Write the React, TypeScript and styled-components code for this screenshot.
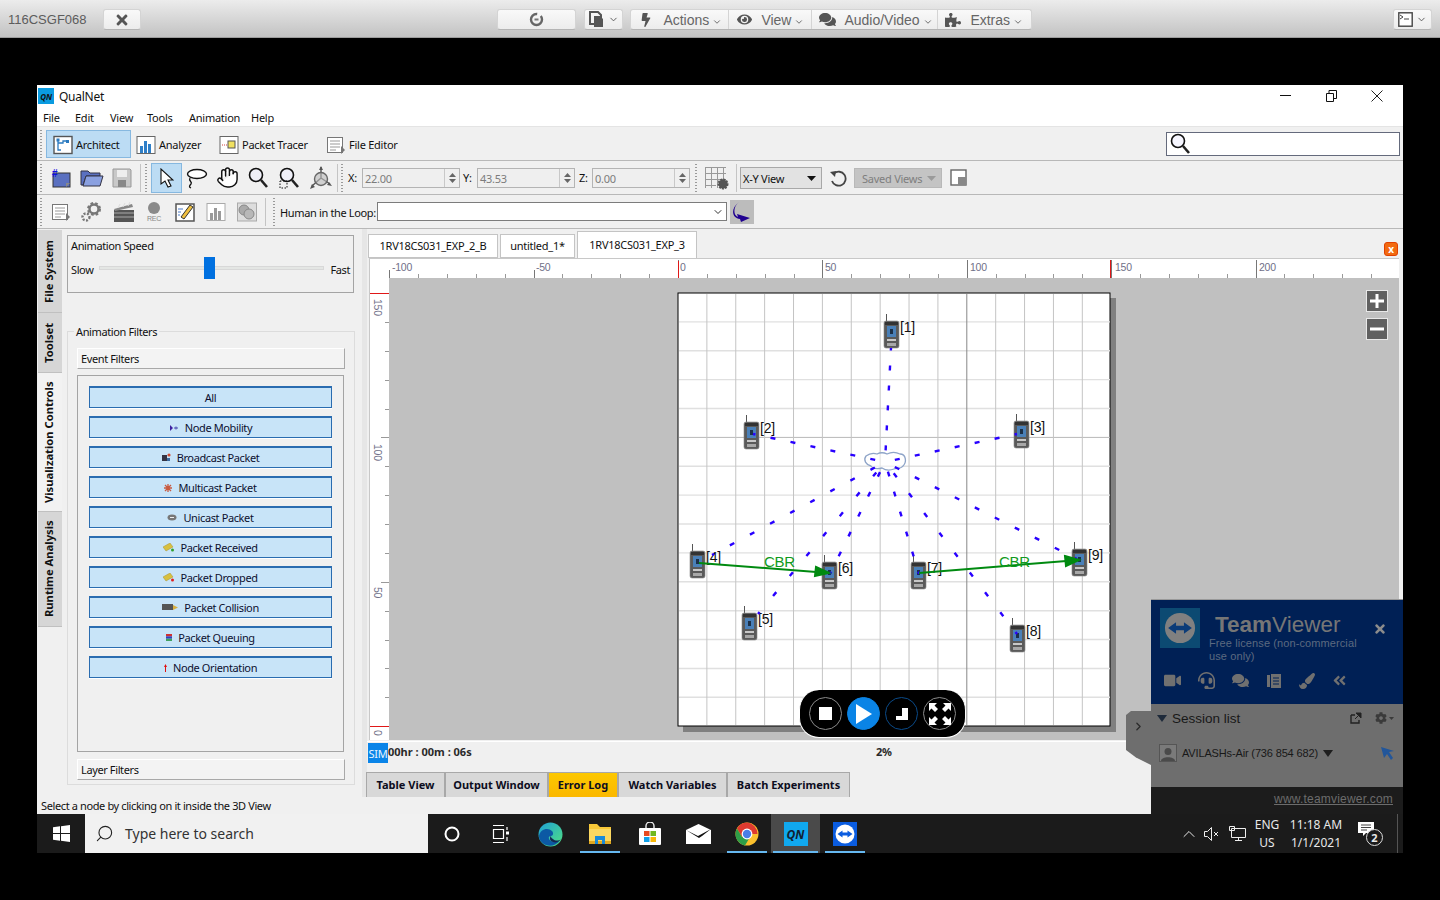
import React from "react";
import styled, { createGlobalStyle } from "styled-components";
import {
  FaBolt,
  FaEye,
  FaComments,
  FaPuzzlePiece,
  FaTimes,
  FaVideo,
  FaHeadset,
  FaPaintBrush,
  FaAngleDoubleLeft,
  FaCog,
} from "react-icons/fa";
import { ChevronDown, ChevronRight, Hand, Search } from "lucide-react";

const GlobalStyle = createGlobalStyle`
  html, body { margin: 0; padding: 0; background: #000; }
  * { box-sizing: border-box; }
  body { font-family: "Liberation Sans", Arial, sans-serif; }
`;

const Page = styled.div`
  width: 1440px;
  height: 900px;
  background: #000;
  overflow: hidden;
`;

/* remote-control bar on top */
const TopBar = styled.div`
  height: 38px;
  display: flex;
  align-items: center;
  padding: 2px 8px 0;
  background: linear-gradient(#ececec, #c2c2c2);
  border-bottom: 1px solid #9c9c9c;
  color: #666;
  font-size: 14px;
`;

const HostName = styled.div`
  width: 96px;
  font-size: 13px;
  color: #5c5c5c;
`;

const BarBtn = styled.div<{ $w: number; $ml?: number }>`
  width: ${(p) => p.$w}px;
  margin-left: ${(p) => p.$ml ?? 0}px;
  height: 21px;
  display: flex;
  align-items: center;
  justify-content: center;
  gap: 3px;
  background: linear-gradient(#f9f9f9, #ececec);
  border: 1px solid #d4d4d4;
  border-bottom-color: #b4b4b4;
  border-radius: 3px;
  color: #555;
`;

const BarGroup = styled.div`
  margin-left: 7px;
  height: 21px;
  display: flex;
  background: linear-gradient(#f9f9f9, #ececec);
  border: 1px solid #d4d4d4;
  border-bottom-color: #b4b4b4;
  border-radius: 3px;
`;

const BarItem = styled.div<{ $w: number }>`
  width: ${(p) => p.$w}px;
  display: flex;
  align-items: center;
  padding-left: 6px;
  border-right: 1px solid #d4d4d4;
  &:last-child { border-right: 0; }
`;

const BarIcon = styled.span`
  width: 18px;
  margin-right: 8px;
  display: flex;
  justify-content: center;
  color: #555;
`;

const Caret = styled(ChevronDown)`
  margin-left: 3px;
  margin-top: 4px;
  color: #555;
`;

/* remote window */
const Desktop = styled.div`
  position: relative;
  width: 1366px;
  height: 768px;
  margin: 47px 0 0 37px;
  background: #f0f0f0;
  display: flex;
  flex-direction: column;
  font-family: "Noto Sans", "Liberation Sans", sans-serif;
  font-size: 11px;
  color: #111;
  letter-spacing: -0.25px;
`;

const TitleBar = styled.div`
  height: 22px;
  background: #fff;
  display: flex;
  align-items: center;
  padding-left: 1px;
  font-size: 12px;
`;

const AppLogo = styled.div`
  width: 16px;
  height: 16px;
  background: #0a9be0;
  color: #111;
  font-size: 8px;
  font-weight: 700;
  font-style: italic;
  display: flex;
  align-items: center;
  justify-content: center;
  margin-right: 5px;
`;

const WinControls = styled.div`
  margin-left: auto;
  display: flex;
  align-items: center;
  padding-right: 3px;
`;

const WinControl = styled.div`
  width: 46px;
  display: flex;
  justify-content: center;
`;

const MenuBar = styled.div`
  height: 20px;
  background: #fff;
  display: flex;
  align-items: center;
  padding: 2px 0 0 6px;
  border-bottom: 1px solid #e4e4e4;
`;

const MenuItem = styled.div<{ $w: number }>`
  width: ${(p) => p.$w}px;
`;

const ToolRow = styled.div`
  height: 34px;
  display: flex;
  align-items: center;
  padding-left: 3px;
  border-bottom: 1px solid #b8b8b8;
  background: #f0f0f0;
  flex: none;
`;

const Grip = styled.div`
  width: 2px;
  height: 28px;
  flex: none;
  background: repeating-linear-gradient(#9a9a9a 0 1px, transparent 1px 3px);
`;

const Sep = styled.div<{ $ml?: number; $mr?: number }>`
  width: 1px;
  height: 28px;
  flex: none;
  background: #c4c4c4;
  margin-left: ${(p) => p.$ml ?? 0}px;
  margin-right: ${(p) => p.$mr ?? 0}px;
`;

const ModeBtn = styled.div<{ $w: number; $active?: boolean }>`
  width: ${(p) => p.$w}px;
  height: 28px;
  display: flex;
  align-items: center;
  gap: 3px;
  padding: 2px 0 0 ${(p) => (p.$active ? 6 : 0)}px;
  background: ${(p) => (p.$active ? "#bcdcf4" : "transparent")};
  border: 1px solid ${(p) => (p.$active ? "#86b8e0" : "transparent")};
`;

const SearchBox = styled.div`
  width: 234px;
  height: 24px;
  margin-left: auto;
  margin-right: 3px;
  background: #fff;
  border: 1px solid #646a7c;
  display: flex;
  align-items: center;
  padding-left: 1px;
`;

const IconCell = styled.div<{ $w: number; $active?: boolean; $ml?: number }>`
  width: ${(p) => p.$w}px;
  height: 30px;
  flex: none;
  margin-left: ${(p) => p.$ml ?? 0}px;
  display: flex;
  align-items: center;
  justify-content: center;
  background: ${(p) => (p.$active ? "#bcdcf4" : "transparent")};
  border: 1px solid ${(p) => (p.$active ? "#86b8e0" : "transparent")};
`;

const CoordLabel = styled.div<{ $w: number; $ml?: number }>`
  width: ${(p) => p.$w}px;
  margin-left: ${(p) => p.$ml ?? 0}px;
`;

const CoordField = styled.div`
  width: 98px;
  height: 20px;
  display: flex;
  border: 1px solid #b4b4b4;
  color: #7c7c7c;
  background: #efefef;
`;

const CoordValue = styled.div`
  flex: 1;
  padding: 2px 2px 0;
  border-right: 1px solid #c8c8c8;
`;

const Spinner = styled.div`
  width: 14px;
  display: flex;
  flex-direction: column;
  align-items: center;
  justify-content: center;
  gap: 2px;
`;

const ViewSelect = styled.div`
  width: 82px;
  height: 22px;
  margin-left: 3px;
  padding: 1px 5px 0 2px;
  display: flex;
  align-items: center;
  justify-content: space-between;
  background: #e2e2e2;
  border: 1px solid #a8a8a8;
`;

const SavedViews = styled.div`
  width: 88px;
  height: 20px;
  margin-left: 1px;
  padding: 1px 5px 0 7px;
  display: flex;
  align-items: center;
  justify-content: space-between;
  background: #c4c4c4;
  border: 1px solid #b8b8b8;
  color: #7e7e7e;
`;

const HitlLabel = styled.div`
  margin-left: 5px;
  width: 97px;
  padding-top: 1px;
  white-space: nowrap;
  letter-spacing: -0.35px;
`;

const HitlCombo = styled.div`
  width: 350px;
  height: 19px;
  background: #fff;
  border: 1px solid #7c7c7c;
  display: flex;
  align-items: center;
  justify-content: flex-end;
  padding-right: 2px;
`;

const HitlArrow = styled.div`
  width: 24px;
  height: 24px;
  margin-left: 3px;
  background: #bcbcbc;
  display: flex;
  align-items: center;
  justify-content: center;
`;

/* main area */
const Main = styled.div`
  flex: 1;
  display: flex;
  min-height: 0;
`;

const VTabs = styled.div`
  width: 25px;
  padding: 1px 0 0 1px;
  flex: none;
  display: flex;
  flex-direction: column;
`;

const VTab = styled.div<{ $h: number; $active?: boolean }>`
  height: ${(p) => p.$h}px;
  width: 24px;
  padding-left: 3px;
  background: ${(p) => (p.$active ? "#f2f2f2" : "#d6d6d6")};
  border-top: 1px solid #c0c0c0;
  display: flex;
  align-items: center;
  justify-content: center;
  writing-mode: vertical-rl;
  transform: rotate(180deg);
  font-weight: 700;
  font-size: 11.2px;
  letter-spacing: 0;
  white-space: nowrap;
`;

const SidePanel = styled.div`
  width: 300px;
  flex: none;
  padding: 6px 0 0 5px;
  display: flex;
  flex-direction: column;
  letter-spacing: -0.38px;
`;

const SpeedBox = styled.div`
  width: 287px;
  height: 58px;
  border: 1px solid #a4a4a4;
  padding: 2px 3px;
`;

const SpeedRow = styled.div`
  display: flex;
  align-items: center;
  margin-top: 9px;
  justify-content: space-between;
`;

const SliderTrack = styled.div`
  position: relative;
  width: 225px;
  height: 4px;
  margin-top: -4px;
  background: #e4e6e4;
  border: 1px solid #d8d8d8;
`;

const SliderThumb = styled.div`
  position: absolute;
  left: 104px;
  top: -10px;
  width: 11px;
  height: 22px;
  background: #0070e0;
`;

const FilterFieldset = styled.fieldset`
  width: 288px;
  height: 460px;
  margin: 32px 0 0;
  padding: 10px 9px 0;
  border: 1px solid #dcdcdc;
  legend { padding: 0 2px; margin-left: -3px; line-height: 13px; }
`;

const SectionBar = styled.div`
  height: 21px;
  width: 268px;
  background: #f3f3f3;
  border-top: 1px solid #fff;
  border-left: 1px solid #fff;
  border-right: 1px solid #a8a8a8;
  border-bottom: 1px solid #a8a8a8;
  display: flex;
  align-items: center;
  padding-left: 3px;
`;

const FilterList = styled.div`
  width: 267px;
  height: 377px;
  margin: 6px 0 7px;
  border: 1px solid #a4a4a4;
  padding: 10px 11px 0;
  display: flex;
  flex-direction: column;
  gap: 8px;
`;

const FilterButton = styled.div`
  height: 22px;
  background: #c8e4f8;
  border: 1px solid #2a6cb0;
  border-top-width: 2px;
  box-shadow: 0 1px 0 #fff;
  display: flex;
  align-items: center;
  justify-content: center;
  gap: 6px;
  color: #0c1030;
`;

const Splitter = styled.div`
  width: 5px;
  flex: none;
  background: #e6e6e6;
`;

const Workspace = styled.div`
  flex: 1;
  min-width: 0;
  display: flex;
  flex-direction: column;
`;

const DocTabs = styled.div`
  height: 29px;
  padding: 3px 6px 0 1px;
  display: flex;
  align-items: flex-end;
  gap: 2px;
  flex: none;
`;

const DocTab = styled.div<{ $w: number; $active?: boolean }>`
  width: ${(p) => p.$w}px;
  height: ${(p) => (p.$active ? 27 : 24)}px;
  padding-bottom: 2px;
  background: #fff;
  border: 1px solid #c4c4c4;
  border-bottom: ${(p) => (p.$active ? 0 : "1px solid #c4c4c4")};
  display: flex;
  align-items: center;
  justify-content: center;
`;

const DocClose = styled.div`
  margin-left: auto;
  margin-bottom: 2px;
  margin-right: -1px;
  width: 14px;
  height: 14px;
  background: #f26a10;
  border: 1px solid #e04000;
  border-radius: 3px;
  color: #fff;
  font-size: 10px;
  font-weight: 700;
  display: flex;
  align-items: center;
  justify-content: center;
`;

const CanvasWrap = styled.div`
  position: relative;
  width: 1030px;
  height: 482px;
  margin-left: 2px;
  flex: none;
  svg { display: block; }
`;

const ZoomBtn = styled.div<{ $top: number }>`
  position: absolute;
  left: 997px;
  top: ${(p) => p.$top}px;
  width: 22px;
  height: 22px;
  background: #606060;
  border: 1px solid #e8e8e8;
  display: flex;
  align-items: center;
  justify-content: center;
`;

const Player = styled.div`
  position: absolute;
  left: 430px;
  top: 432px;
  width: 167px;
  height: 48px;
  background: #000;
  border: 1px solid #fff;
  border-top: 0;
  border-radius: 20px;
  display: flex;
  align-items: center;
  justify-content: center;
  gap: 5px;
`;

const PlayerBtn = styled.div<{ $tone: "plain" | "blue" | "navy" }>`
  width: 33px;
  height: 33px;
  border-radius: 50%;
  display: flex;
  align-items: center;
  justify-content: center;
  background: ${(p) => (p.$tone === "blue" ? "#0a84e6" : "#000")};
  border: 1px solid ${(p) => (p.$tone === "plain" ? "#8a8a8a" : p.$tone === "navy" ? "#0a4a88" : "#0a84e6")};
`;

const SimRow = styled.div`
  height: 31px;
  margin-top: 1px;
  border-top: 1px solid #fff;
  display: flex;
  align-items: flex-start;
  padding-left: 1px;
  flex: none;
`;

const SimBadge = styled.div`
  width: 20px;
  height: 20px;
  margin-top: 1px;
  background: #0a84e8;
  color: #e8f4ff;
  display: flex;
  align-items: center;
  justify-content: center;
  overflow: hidden;
`;

const SimTime = styled.div`
  margin-top: 2px;
  width: 488px;
  font-weight: 700;
  color: #2a2a2a;
  letter-spacing: 0;
`;

const SimPercent = styled.div`
  margin-top: 2px;
  font-weight: 700;
  color: #2a2a2a;
`;

const BottomTabs = styled.div`
  display: flex;
  height: 25px;
  flex: none;
  margin-left: -1px;
`;

const BottomTab = styled.div<{ $w: number; $warn?: boolean }>`
  width: ${(p) => p.$w}px;
  padding-bottom: 2px;
  background: ${(p) => (p.$warn ? "linear-gradient(#fdc800, #fbb800)" : "#d8d8d8")};
  border: 1px solid #a8a8a8;
  border-bottom: 0;
  font-weight: 700;
  color: #0c0c20;
  letter-spacing: 0;
  display: flex;
  align-items: center;
  justify-content: center;
`;

const StatusBar = styled.div`
  height: 17px;
  flex: none;
  padding: 1px 0 0 4px;
  letter-spacing: -0.38px;
`;

/* windows taskbar */
const Taskbar = styled.div`
  height: 39px;
  flex: none;
  background: #1b1b1b;
  display: flex;
  color: #fff;
  letter-spacing: 0;
`;

const StartBtn = styled.div`
  width: 48px;
  display: flex;
  align-items: center;
  justify-content: center;
`;

const SearchField = styled.div`
  width: 343px;
  background: #f1f1f1;
  color: #333;
  font-size: 14px;
  display: flex;
  align-items: center;
  gap: 11px;
  padding-left: 10px;
`;

const TaskSlot = styled.div<{ $line?: number; $active?: boolean; $w?: number }>`
  width: ${(p) => p.$w ?? 49}px;
  height: 39px;
  padding-top: 1px;
  display: flex;
  align-items: center;
  justify-content: center;
  background-color: ${(p) => (p.$active ? "#4a4a4a" : "transparent")};
  background-image: ${(p) => (p.$line ? "linear-gradient(#66b8f0, #66b8f0)" : "none")};
  background-repeat: no-repeat;
  background-position: center bottom;
  background-size: ${(p) => p.$line ?? 0}px 2px;
`;

const QnTile = styled.div`
  width: 24px;
  height: 24px;
  background: #10a8ee;
  color: #123;
  font-size: 12px;
  font-weight: 700;
  font-style: italic;
  display: flex;
  align-items: center;
  justify-content: center;
`;

const Tray = styled.div`
  margin-left: auto;
  display: flex;
  align-items: center;
  font-size: 12px;
  color: #e8e8e8;
`;

const TrayCell = styled.div<{ $w: number }>`
  width: ${(p) => p.$w}px;
  text-align: center;
  display: flex;
  flex-direction: column;
  align-items: center;
  line-height: 18px;
`;

const TrayChevron = styled(ChevronDown)`
  transform: rotate(180deg);
`;

const NotifyBadge = styled.div`
  position: absolute;
  left: 9px;
  top: 9px;
  width: 17px;
  height: 17px;
  border-radius: 50%;
  border: 1px solid #ddd;
  background: #1b1b1b;
  font-size: 11px;
  font-weight: 700;
  line-height: 15px;
  text-align: center;
`;

const NotifyWrap = styled.div`
  position: relative;
  width: 30px;
  height: 28px;
  padding-top: 1px;
  margin-left: 8px;
  margin-right: 10px;
`;

const ShowDesktop = styled.div`
  width: 6px;
  height: 39px;
  border-left: 1px solid #555;
`;

/* teamviewer panel */
const TvPanel = styled.div`
  position: absolute;
  left: 1114px;
  top: 514px;
  width: 252px;
  height: 215px;
  display: flex;
  flex-direction: column;
  border-top: 1px solid #999;
  letter-spacing: 0;
  font-family: "Liberation Sans", sans-serif;
`;

const TvHead = styled.div`
  height: 104px;
  background: #002055;
  position: relative;
  flex: none;
`;

const TvLogoBox = styled.div`
  position: absolute;
  left: 9px;
  top: 8px;
  width: 40px;
  height: 40px;
  background: #0c4a72;
  display: flex;
  align-items: center;
  justify-content: center;
`;

const TvBrand = styled.div`
  position: absolute;
  left: 64px;
  top: 12px;
  font-size: 22.5px;
  color: #767676;
  line-height: 26px;
  b { font-weight: 700; }
`;

const TvSub = styled.div`
  position: absolute;
  left: 58px;
  top: 37px;
  width: 160px;
  font-size: 11px;
  line-height: 13px;
  color: #5c6a80;
  letter-spacing: 0.1px;
`;

const TvClose = styled.div`
  position: absolute;
  right: 16px;
  top: 22px;
  color: #8c8c8c;
`;

const TvTools = styled.div`
  position: absolute;
  left: 13px;
  top: 72px;
  display: flex;
  gap: 17px;
  color: #707070;
  align-items: center;
`;

const TvBody = styled.div`
  flex: 1;
  background: #6e6e6e;
  color: #181818;
  padding: 6px 9px 0 6px;
`;

const TvRow = styled.div`
  display: flex;
  align-items: center;
  font-size: 13.5px;
  gap: 5px;
  height: 16px;
  white-space: nowrap;
`;

const TvRowEnd = styled.div`
  margin-left: auto;
  display: flex;
  align-items: center;
  gap: 2px;
`;

const TvExternal = styled.svg`
  margin-right: 11px;
`;

const TvSessionRow = styled.div`
  display: flex;
  align-items: center;
  font-size: 11px;
  letter-spacing: -0.15px;
  gap: 5px;
  margin-top: 18px;
  height: 18px;
  padding-left: 2px;
  white-space: nowrap;
`;

const TvAvatar = styled.div`
  width: 18px;
  height: 18px;
  border: 1px solid #555;
  background: #7a7a7a;
  display: flex;
  align-items: flex-end;
  justify-content: center;
`;

const TvFoot = styled.div`
  height: 27px;
  background: #1c1c1c;
  color: #6c6c6c;
  font-size: 12px;
  letter-spacing: 0.2px;
  text-decoration: underline;
  text-align: right;
  padding: 5px 10px 0 0;
  flex: none;
`;

const TvHandle = styled.div`
  position: absolute;
  left: 1089px;
  top: 626px;
  width: 25px;
  height: 54px;
  background: #6e6e6e;
  clip-path: polygon(5px 0, 100% 0, 100% 100%, 40% 86%, 0 72%, 0 4px);
  display: flex;
  align-items: flex-start;
  justify-content: center;
  padding-top: 9px;
  color: #2a2a2a;
`;

/* drawn icons */
const Svg: React.FC<{ w?: number; h?: number; children: React.ReactNode }> = ({ w = 22, h = 22, children }) => (
  <svg width={w} height={h} viewBox={`0 0 ${w} ${h}`}>{children}</svg>
);

const Magnifier: React.FC<{ dashed?: boolean }> = ({ dashed }) => (
  <Svg w={24} h={24}>
    <circle cx="10" cy="9" r="6.5" fill="#eef" fillOpacity=".5" stroke="#111" strokeWidth="1.6" />
    <path d="M15 14l6 7" stroke="#222" strokeWidth="2.6" />
    {dashed && <rect x="3" y="15" width="7" height="7" fill="none" stroke="#111" strokeDasharray="1.5 1.5" />}
  </Svg>
);

const DocIcon: React.FC<{ w?: number }> = ({ w = 20 }) => (
  <Svg w={w} h={20}>
    <rect x="1.5" y="2.5" width="15" height="15" fill="#fff" stroke="#777" />
    <path d="M4 6h10M4 9h10M4 12h10M4 15h6" stroke="#999" />
    <path d="M15 11l4 4-4 4z" fill="#777" />
  </Svg>
);

const BarsIcon: React.FC<{ grey?: boolean }> = ({ grey }) => {
  const fill = grey ? "#9a9a9a" : "#2f7fc8";
  return (
    <Svg w={20} h={20}>
      <rect x="1" y="1.5" width="18" height="17" fill="#fff" stroke={grey ? "#aaa" : "#666"} />
      <rect x="4" y="11" width="3" height="7" fill={fill} />
      <rect x="8" y="6" width="3" height="12" fill={fill} />
      <rect x="12" y="9" width="3" height="9" fill={fill} />
    </Svg>
  );
};

const GearIcon = () => (
  <Svg w={24} h={22}>
    <circle cx="14" cy="8" r="5.5" fill="none" stroke="#777" strokeWidth="3" strokeDasharray="2.4 2" />
    <circle cx="14" cy="8" r="4.5" fill="none" stroke="#777" strokeWidth="2.4" />
    <circle cx="6" cy="16" r="3.5" fill="none" stroke="#777" strokeWidth="2.4" strokeDasharray="2 1.4" />
  </Svg>
);

const Clapper = () => (
  <Svg w={24} h={24}>
    <rect x="2" y="10" width="20" height="12" fill="#555" />
    <path d="M2 13h20M2 17h20" stroke="#aaa" />
    <path d="M2 9l18-5 1 3L3 11z" fill="#888" />
    <path d="M6 8l2-4M11 7l2-4M16 6l2-4" stroke="#ddd" />
  </Svg>
);

const RecIcon = () => (
  <Svg w={22} h={24}>
    <circle cx="11" cy="8" r="6" fill="#8a8a8a" />
    <text x="11" y="21" fontSize="7" textAnchor="middle" fill="#888" fontFamily="Liberation Sans">REC</text>
  </Svg>
);

const EditIcon = () => (
  <Svg w={22} h={22}>
    <rect x="2" y="3" width="18" height="17" fill="#fff" stroke="#555" strokeWidth="1.5" />
    <path d="M7 16l9-12 3 2-9 12z" fill="#f0c040" stroke="#333" />
    <path d="M4 8h5M4 11h3M4 14h2" stroke="#4a7ac8" />
  </Svg>
);

const DiscsIcon = () => (
  <Svg w={22} h={22}>
    <rect x="1.500" y="2" width="19" height="18" fill="#ddd" stroke="#aaa" />
    <circle cx="8" cy="9" r="5" fill="#aaa" stroke="#888" />
    <circle cx="13" cy="13" r="5" fill="#b8b8b8" stroke="#888" />
  </Svg>
);

const SmallArchitect = () => (
  <Svg w={20} h={20}>
    <rect x="1" y="1.5" width="18" height="17" fill="#fff" stroke="#555" strokeWidth="1.4" />
    <path d="M5 5v10h3M5 8h5v-2h5" fill="none" stroke="#2a7ac0" strokeWidth="1.3" />
    <rect x="3.5" y="3.5" width="3" height="3" fill="#2a7ac0" />
    <rect x="13" y="5" width="3" height="3" fill="#2a7ac0" />
  </Svg>
);

const TracerIcon = () => (
  <Svg w={20} h={20}>
    <rect x="1" y="1.5" width="18" height="17" fill="#fff" stroke="#666" />
    <rect x="9" y="6" width="7" height="7" fill="#f0e060" stroke="#555" />
    <path d="M3 10h5" stroke="#d04040" strokeDasharray="1 1" />
  </Svg>
);

const FilterIcon: React.FC<{ kind: string }> = ({ kind }) => {
  if (kind === "mobility")
    return <Svg w={10} h={8}><path d="M1 1l3 3-3 3z" fill="#4020a0" /><path d="M5 4h4M7 2.5v3" stroke="#4a4ab0" /></Svg>;
  if (kind === "broadcast")
    return <Svg w={9} h={9}><rect x="0" y="2" width="5" height="6" fill="#334" /><circle cx="7" cy="2" r="1.6" fill="#d04a30" /><rect x="5" y="5" width="3" height="3" fill="#3a6aa0" /></Svg>;
  if (kind === "multicast")
    return <Svg w={8} h={8}><path d="M4 0v8M0 4h8M1 1l6 6M7 1L1 7" stroke="#c85a40" strokeWidth="1.3" /></Svg>;
  if (kind === "unicast")
    return <Svg w={10} h={7}><ellipse cx="5" cy="3.5" rx="4.5" ry="3" fill="#777" /><path d="M3 3.5h4" stroke="#eee" /></Svg>;
  if (kind === "received" || kind === "dropped")
    return (
      <Svg w={11} h={9}>
        <path d="M0 4l7-4 3 4-7 4z" fill="#d8c040" stroke="#a89030" strokeWidth=".5" />
        <circle cx="9.5" cy="7" r="1.5" fill={kind === "received" ? "#30a030" : "#e02020"} />
      </Svg>
    );
  if (kind === "collision")
    return <Svg w={16} h={7}><rect x="0" y="0" width="11" height="6" fill="#555" /><path d="M11 1l5 2.5-5 2.5z" fill="#d8b040" /></Svg>;
  if (kind === "queue")
    return <Svg w={6} h={7}><rect width="6" height="2.4" fill="#d03030" /><rect y="2.4" width="6" height="2.3" fill="#3040c0" /><rect y="4.7" width="6" height="2.3" fill="#40a060" /></Svg>;
  if (kind === "orient")
    return <Svg w={3} h={8}><path d="M1.5 0l1.5 3H2v5H1V3H0z" fill="#e01010" /></Svg>;
  return null;
};

const Phone: React.FC<{ x: number; y: number; n: number }> = ({ x, y, n }) => (
  <g>
    <path d={`M${x + 2.5} ${y - 7}v7`} stroke="#555" />
    <rect x={x} y={y} width="15" height="27" rx="2" fill="#5a5a5a" stroke="#888" strokeWidth=".6" />
    <rect x={x + 1} y={y + 1} width="13" height="3" fill="#333" />
    <rect x={x + 3} y={y + 5} width="9" height="11" fill="#4a80b8" />
    <rect x={x + 6} y={y + 8} width="3" height="5" fill="#1c3048" />
    <rect x={x + 3} y={y + 18} width="9" height="2" fill="#c8c8c8" />
    <rect x={x + 3} y={y + 22} width="9" height="3" fill="#a8a8a8" />
    <text x={x + 16} y={y + 11} fontSize="14" fill="#111" fontFamily="Liberation Sans">[{n}]</text>
  </g>
);

const phones = [
  { n: 1, x: 884, y: 321 },
  { n: 2, x: 744, y: 422 },
  { n: 3, x: 1014, y: 421 },
  { n: 4, x: 690, y: 551 },
  { n: 5, x: 742, y: 613 },
  { n: 6, x: 822, y: 562 },
  { n: 7, x: 911, y: 562 },
  { n: 8, x: 1010, y: 625 },
  { n: 9, x: 1072, y: 549 },
];

// wireless links to the subnet cloud, each with its own dash period
const links = [
  { x: 891, y: 348, period: 20 },
  { x: 753, y: 434, period: 20.4 },
  { x: 1017, y: 434, period: 20.4 },
  { x: 712, y: 555, period: 22.8 },
  { x: 758, y: 614, period: 26 },
  { x: 830, y: 574, period: 22.2 },
  { x: 919, y: 574, period: 20.9 },
  { x: 1017, y: 634, period: 25 },
  { x: 1077, y: 559, period: 22.4 },
];

// major/minor ticks are every 144.4 / 28.88 px, zero sits at x=678
const STEP = 28.88;
const xTicks = Array.from({ length: 35 }, (_, i) => i - 10);
const vLines = Array.from({ length: 14 }, (_, i) => 678 + (i + 1) * STEP);
const hLines = Array.from({ length: 14 }, (_, i) => 293 + (i + 1) * STEP);
const yTicks = Array.from({ length: 16 }, (_, i) => 293 + i * STEP);
const xLabels = [
  { t: "-100", x: 392 },
  { t: "-50", x: 536 },
  { t: "0", x: 680 },
  { t: "50", x: 825 },
  { t: "100", x: 970 },
  { t: "150", x: 1115 },
  { t: "200", x: 1259 },
];
const yLabels = [
  { t: "150", y: 299 },
  { t: "100", y: 444 },
  { t: "50", y: 587 },
  { t: "0", y: 730 },
];

const TopologyCanvas = () => (
  <svg width={1030} height={482} viewBox="369 258 1030 482" fontFamily="Liberation Sans">
    <rect x="369" y="258" width="1030" height="482" fill="#fff" />
    <rect x="389" y="278" width="1010" height="462" fill="#c0c0c0" />
    <path d="M369.5 258v482M369 258.500h1030" stroke="#c8c8c8" fill="none" />
    {xTicks.map((k) => {
      const x = Math.round(678 + k * STEP) + 0.5;
      const major = k % 5 === 0;
      const top = major ? (k < 0 ? 270 : 260) : 274;
      return x > 389 && x < 1399 && <path key={k} d={`M${x} ${top}V278`} stroke={major ? "#777" : "#999"} />;
    })}
    <path d="M678.500 261v17M1110.500 260v18" stroke="#e01818" />
    {xLabels.map((l) => (
      <text key={l.t} x={l.x} y={271} fontSize="10.5" fill="#707088">{l.t}</text>
    ))}
    {yTicks.map((y, i) => (
      <path key={i} d={`M${i % 5 === 0 ? 381 : 385} ${Math.round(y) + 0.5}H389`} stroke="#999" />
    ))}
    <path d="M370 293.500h19M370 726.500h19" stroke="#e01818" />
    {yLabels.map((l) => (
      <text key={l.t} x={374} y={l.y} fontSize="10.5" fill="#707088" transform={`rotate(90 ${374} ${l.y})`}>{l.t}</text>
    ))}

    <rect x="683" y="298" width="433" height="434" fill="#808080" />
    <rect x="678" y="293" width="432" height="433" fill="#fff" stroke="#000" />
    {hLines.map((y, i) => (
      <path key={i} d={`M679 ${y}H1110`} stroke={i === 4 ? "#b8b8b8" : "#e0e0e0"} strokeWidth={i === 4 ? 1 : 1.4} />
    ))}
    {vLines.map((x, i) => (
      <path key={i} d={`M${x} 294V725`} stroke={i === 9 ? "#888" : "#c4c4c4"} />
    ))}

    <path
      d="M866 456c4-3 8-3 11-2 4-2 8-1 10 0 4-2 9-2 13 0 6 0 7 8 3 12-2 3-6 2-9 3-5 2-9 1-12-1-5 1-9 1-11-2-5-1-8-6-5-10z"
      fill="#fff"
      fillOpacity=".5"
      stroke="#8ea4c8"
      strokeWidth="1.3"
    />

    {phones.map((p) => (
      <Phone key={p.n} {...p} />
    ))}

    <g stroke="#2800ff" strokeWidth="2.4" fill="none">
      {links.map((l) => (
        <path
          key={l.x}
          d={`M${l.x} ${l.y}L885 462`}
          strokeDasharray={`5 ${l.period - 5}`}
          strokeDashoffset="2.5"
        />
      ))}
    </g>

    <g stroke="#008a10" strokeWidth="2" fill="#008a10">
      <path d="M699 563L829 573" />
      <path d="M816 567l13 6-14 3z" />
      <path d="M919 573L1079 560" />
      <path d="M1065 556l14 4-13 6z" />
    </g>
    <text x="764" y="567" fontSize="15" fill="#109a20">CBR</text>
    <text x="999" y="567" fontSize="15" fill="#109a20">CBR</text>
  </svg>
);

const EdgeLogo = () => (
  <svg width="25" height="25" viewBox="0 0 25 25">
    <defs>
      <linearGradient id="edgeG" x1="0" y1="0" x2="1" y2="1">
        <stop offset="0" stopColor="#1ea0d8" />
        <stop offset="1" stopColor="#50e080" />
      </linearGradient>
    </defs>
    <circle cx="12.5" cy="12.5" r="12" fill="url(#edgeG)" />
    <path d="M1 14c1-7 9-9 13-5 2 2 1 5-1 5-3 0-3 3 0 5 3 2 7 1 9-1-3 5-9 7-14 5-5-2-7-6-7-9z" fill="#0c59a4" />
    <path d="M13 14c-2 2-1 5 2 6 3 1 6 0 8-3-2 2-6 2-8 0-2-1-2-2-2-3z" fill="#142850" />
  </svg>
);

const FolderLogo = () => (
  <svg width="24" height="22" viewBox="0 0 24 22">
    <path d="M1 1h8l3 3h11v17H1z" fill="#f8c838" />
    <path d="M1 6h22v15H1z" fill="#fcd860" />
    <path d="M1 18h22v3H1z" fill="#e0a820" />
    <path d="M7 21v-8h10v8h-3v-4h-4v4z" fill="#1a8ad8" />
  </svg>
);

const StoreLogo = () => (
  <svg width="24" height="24" viewBox="0 0 24 24">
    <path d="M8 7V4a4 4 0 018 0v3" fill="none" stroke="#eee" strokeWidth="1.4" />
    <rect x="1" y="6" width="22" height="17" rx="1" fill="#fff" />
    <rect x="6" y="9" width="5.5" height="5" fill="#e84a20" />
    <rect x="12.5" y="9" width="5.5" height="5" fill="#70b820" />
    <rect x="6" y="15" width="5.5" height="5" fill="#10a0e8" />
    <rect x="12.5" y="15" width="5.5" height="5" fill="#f8b808" />
  </svg>
);

const MailLogo = () => (
  <svg width="25" height="20" viewBox="0 0 25 20">
    <path d="M0 6L12.5 0 25 6v14H0z" fill="#fff" />
    <path d="M0 6l12 6 13-7-9 7-3 2z" fill="#111" />
  </svg>
);

const ChromeLogo = () => (
  <svg width="24" height="24" viewBox="0 0 24 24">
    <circle cx="12" cy="12" r="11.5" fill="#fbc02d" />
    <path d="M12 .5A11.5 11.5 0 002 6.5L7 15l5-3h10.5A11.5 11.5 0 0012 .5z" fill="#de3a30" />
    <path d="M2 6.5a11.5 11.5 0 0 0 8 17L15 15l-3-3-5 3z" fill="#2e9e48" />
    <circle cx="12" cy="12" r="5.4" fill="#fff" />
    <circle cx="12" cy="12" r="4.2" fill="#4a7ee8" />
  </svg>
);

const TvArrows: React.FC<{ bg: string; disc: string; arrow: string; size: number }> = ({ bg, disc, arrow, size }) => (
  <svg width={size} height={size} viewBox="0 0 24 24">
    <rect width="24" height="24" fill={bg} />
    <circle cx="12" cy="12" r="9.5" fill={disc} />
    <path d="M4.5 12l5-3.6v2.2h5V8.4l5 3.6-5 3.6v-2.2h-5v2.2z" fill={arrow} />
  </svg>
);

const WindowsLogo = () => (
  <svg width="17" height="17" viewBox="0 0 17 17">
    <path d="M0 2.3l7-1v6.7H0zM8 1.2L17 0v8H8zM0 9h7v6.7l-7-1zM8 9h9v8l-9-1.2z" fill="#fff" />
  </svg>
);

const filters = [
  { label: "All", kind: "" },
  { label: "Node Mobility", kind: "mobility" },
  { label: "Broadcast Packet", kind: "broadcast" },
  { label: "Multicast Packet", kind: "multicast" },
  { label: "Unicast Packet", kind: "unicast" },
  { label: "Packet Received", kind: "received" },
  { label: "Packet Dropped", kind: "dropped" },
  { label: "Packet Collision", kind: "collision" },
  { label: "Packet Queuing", kind: "queue" },
  { label: "Node Orientation", kind: "orient" },
];

const SpinArrows = () => (
  <Spinner>
    <svg width="7" height="4"><path d="M0 4l3.5-4L7 4z" fill="#666" /></svg>
    <svg width="7" height="4"><path d="M0 0l3.5 4L7 0z" fill="#666" /></svg>
  </Spinner>
);

const App: React.FC = () => {
  return (
    <Page>
      <GlobalStyle />
      <TopBar>
        <HostName>116CSGF068</HostName>
        <BarBtn $w={38}><FaTimes size={16} color="#555" /></BarBtn>
        <BarBtn $w={80} $ml={356}>
          <svg width="15" height="15" viewBox="0 0 15 15">
            <circle cx="7.5" cy="7.5" r="5.5" fill="none" stroke="#666" strokeWidth="2.4" strokeDasharray="26 4" />
            <rect x="5.5" y="6.5" width="4" height="2" fill="#777" />
          </svg>
        </BarBtn>
        <BarBtn $w={40} $ml={8}>
          <svg width="16" height="17" viewBox="0 0 16 17">
            <path d="M1 1h8l3 3v9H1z" fill="none" stroke="#555" strokeWidth="2" />
            <path d="M5 5h6l3 3v8H5z" fill="#555" />
          </svg>
          <ChevronDown size={11} />
        </BarBtn>
        <BarGroup>
          <BarItem $w={98}><BarIcon><FaBolt size={14} /></BarIcon>Actions<Caret size={10} /></BarItem>
          <BarItem $w={83}><BarIcon><FaEye size={15} /></BarIcon>View<Caret size={10} /></BarItem>
          <BarItem $w={126}><BarIcon><FaComments size={17} /></BarIcon>Audio/Video<Caret size={10} /></BarItem>
          <BarItem $w={93}><BarIcon><FaPuzzlePiece size={16} /></BarIcon>Extras<Caret size={10} /></BarItem>
        </BarGroup>
        <BarBtn $w={39} $ml={361}>
          <svg width="15" height="15" viewBox="0 0 15 15">
            <rect x=".8" y=".8" width="13.4" height="13.4" fill="#fff" stroke="#444" strokeWidth="1.4" />
            <path d="M2 3l3 2-3 2M6 7h5" fill="none" stroke="#444" />
          </svg>
          <ChevronDown size={11} />
        </BarBtn>
      </TopBar>

      <Desktop>
        <TitleBar>
          <AppLogo>QN</AppLogo>
          QualNet
          <WinControls>
            <WinControl><svg width="11" height="2"><rect width="11" height="1" fill="#111" /></svg></WinControl>
            <WinControl>
              <svg width="11" height="12" viewBox="0 0 11 12">
                <path d="M.5 3.5h7v8h-7zM3 3.5V.5h7.5v8h-3" fill="none" stroke="#111" />
              </svg>
            </WinControl>
            <WinControl>
              <svg width="12" height="12" viewBox="0 0 12 12"><path d="M.5.5l11 11M11.5.5l-11 11" stroke="#222" /></svg>
            </WinControl>
          </WinControls>
        </TitleBar>

        <MenuBar>
          <MenuItem $w={32}>File</MenuItem>
          <MenuItem $w={35}>Edit</MenuItem>
          <MenuItem $w={37}>View</MenuItem>
          <MenuItem $w={42}>Tools</MenuItem>
          <MenuItem $w={62}>Animation</MenuItem>
          <MenuItem $w={30}>Help</MenuItem>
        </MenuBar>

        <ToolRow>
          <Grip />
          <IconCell $w={4} />
          <ModeBtn $w={85} $active><SmallArchitect /> Architect</ModeBtn>
          <IconCell $w={4} />
          <ModeBtn $w={83}><BarsIcon /> Analyzer</ModeBtn>
          <ModeBtn $w={107}><TracerIcon /> Packet Tracer</ModeBtn>
          <ModeBtn $w={80}><DocIcon /> File Editor</ModeBtn>
          <SearchBox><Magnifier /></SearchBox>
        </ToolRow>

        <ToolRow>
          <Grip />
          <IconCell $w={5} />
          <IconCell $w={28}>
            <Svg w={20} h={20}>
              <rect x="2" y="5" width="17" height="14" fill="#5a70c0" stroke="#333" />
              <path d="M15 19l4-4h-4z" fill="#888" />
              <text x="1" y="9" fontSize="10" fontWeight="700" fill="#1010e0" fontFamily="Liberation Sans">#</text>
            </Svg>
          </IconCell>
          <IconCell $w={34}>
            <Svg w={24} h={20}>
              <path d="M1 17V3h7l2 2h10v3H6l-3 9z" fill="#5a70c0" stroke="#334" />
              <path d="M3 18l3-10h17l-3 10z" fill="#8aa0e0" stroke="#334" />
            </Svg>
          </IconCell>
          <IconCell $w={26}>
            <Svg w={20} h={20}>
              <path d="M1 1h17l1 1v17H1z" fill="#c8c8c8" stroke="#999" />
              <rect x="5" y="2" width="10" height="7" fill="#eee" />
              <rect x="6" y="12" width="8" height="7" fill="#888" />
            </Svg>
          </IconCell>
          <IconCell $w={5} />
          <Sep />
          <IconCell $w={4} />
          <Grip />
          <IconCell $w={4} />
          <IconCell $w={31} $active>
            <svg width="14" height="20" viewBox="0 0 14 20">
              <path d="M1 1v15l4-3 3 6 3-1-3-6h5z" fill="#fff" stroke="#111" strokeWidth="1.1" />
            </svg>
          </IconCell>
          <IconCell $w={30}>
            <Svg w={24} h={22}>
              <ellipse cx="12" cy="7" rx="9.5" ry="4.5" fill="#fff" stroke="#111" strokeWidth="1.4" />
              <path d="M5 11c-2 3 3 4 1 6s-2 3 0 4" fill="none" stroke="#111" strokeWidth="1.3" />
            </Svg>
          </IconCell>
          <IconCell $w={31}><Hand size={23} strokeWidth={1.5} color="#111" fill="#fff" /></IconCell>
          <IconCell $w={30}><Magnifier /></IconCell>
          <IconCell $w={31}><Magnifier dashed /></IconCell>
          <IconCell $w={33}>
            <Svg w={24} h={24}>
              <path d="M12 1v11L3 20M12 12l9 6" stroke="#555" strokeWidth="1.4" fill="none" />
              <circle cx="12" cy="13" r="6.5" fill="#bbb" fillOpacity=".6" stroke="#666" strokeWidth="1.4" />
              <path d="M12 0l-2 4h4zM1 23l2-5 3 3zM23 20l-5-1 2-3z" fill="#555" />
            </Svg>
          </IconCell>
          <Sep $mr={3} />
          <Grip />
          <CoordLabel $w={14} $ml={5}>X:</CoordLabel>
          <CoordField><CoordValue>22.00</CoordValue><SpinArrows /></CoordField>
          <CoordLabel $w={14} $ml={3}>Y:</CoordLabel>
          <CoordField><CoordValue>43.53</CoordValue><SpinArrows /></CoordField>
          <CoordLabel $w={13} $ml={4}>Z:</CoordLabel>
          <CoordField><CoordValue>0.00</CoordValue><SpinArrows /></CoordField>
          <IconCell $w={5} />
          <Grip />
          <IconCell $w={39}>
            <Svg w={26} h={26}>
              <path d="M1.500 2v21M7.500 2v21M13.500 2v21M19.500 2v12M1 2.500h21M1 8.500h21M1 14.500h21M1 20.500h11" stroke="#999" fill="none" />
              <circle cx="19" cy="19" r="4.5" fill="#555" stroke="#555" strokeDasharray="2 1" strokeWidth="2" />
            </Svg>
          </IconCell>
          <Sep />
          <ViewSelect>
            X-Y View
            <svg width="9" height="5"><path d="M0 0h9L4.5 5z" fill="#111" /></svg>
          </ViewSelect>
          <IconCell $w={31}>
            <svg width="18" height="18" viewBox="0 0 18 18">
              <path d="M5 4.4A7 7 0 1 1 3 12" fill="none" stroke="#444" strokeWidth="1.8" />
              <path d="M1 3l6-1-1 6z" fill="#444" />
            </svg>
          </IconCell>
          <SavedViews>
            Saved Views
            <svg width="9" height="5"><path d="M0 0h9L4.5 5z" fill="#9a9a9a" /></svg>
          </SavedViews>
          <IconCell $w={33}>
            <svg width="17" height="17" viewBox="0 0 17 17">
              <rect x="1" y="1" width="15" height="15" fill="#fff" stroke="#666" strokeWidth="1.4" />
              <rect x="8" y="8" width="8" height="8" fill="#888" />
            </svg>
          </IconCell>
        </ToolRow>

        <ToolRow>
          <Grip />
          <IconCell $w={5} />
          <IconCell $w={27}><DocIcon /></IconCell>
          <IconCell $w={36}><GearIcon /></IconCell>
          <IconCell $w={28}><Clapper /></IconCell>
          <IconCell $w={32}><RecIcon /></IconCell>
          <IconCell $w={30}><EditIcon /></IconCell>
          <IconCell $w={32}><BarsIcon grey /></IconCell>
          <IconCell $w={30}><DiscsIcon /></IconCell>
          <Sep $ml={3} />
          <IconCell $w={7} />
          <Grip />
          <HitlLabel>Human in the Loop:</HitlLabel>
          <HitlCombo><ChevronDown size={12} color="#333" /></HitlCombo>
          <HitlArrow>
            <svg width="22" height="22" viewBox="0 0 22 22">
              <path d="M8 1C2 6 2 14 7 16l-1-3 13 4-9 4-1-3C1 17-1 8 8 1z" fill="#200090" />
            </svg>
          </HitlArrow>
        </ToolRow>

        <Main>
          <VTabs>
            <VTab $h={83}>File System</VTab>
            <VTab $h={60}>Toolset</VTab>
            <VTab $h={139} $active>Visualization Controls</VTab>
            <VTab $h={115}>Runtime Analysis</VTab>
          </VTabs>
          <SidePanel>
            <SpeedBox>
              Animation Speed
              <SpeedRow>
                Slow
                <SliderTrack><SliderThumb /></SliderTrack>
                Fast
              </SpeedRow>
            </SpeedBox>
            <FilterFieldset>
              <legend>Animation Filters</legend>
              <SectionBar>Event Filters</SectionBar>
              <FilterList>
                {filters.map((f) => (
                  <FilterButton key={f.label}>
                    {f.kind && <FilterIcon kind={f.kind} />}
                    {f.label}
                  </FilterButton>
                ))}
              </FilterList>
              <SectionBar>Layer Filters</SectionBar>
            </FilterFieldset>
          </SidePanel>
          <Splitter />
          <Workspace>
            <DocTabs>
              <DocTab $w={130}>1RV18CS031_EXP_2_B</DocTab>
              <DocTab $w={75}>untitled_1*</DocTab>
              <DocTab $w={120} $active>1RV18CS031_EXP_3</DocTab>
              <DocClose>x</DocClose>
            </DocTabs>
            <CanvasWrap>
              <TopologyCanvas />
              <ZoomBtn $top={32}>
                <svg width="14" height="14"><path d="M5.500 0h3v5.500H14v3H8.500V14h-3V8.500H0v-3h5.500z" fill="#fff" /></svg>
              </ZoomBtn>
              <ZoomBtn $top={60}>
                <svg width="14" height="14"><rect y="5.500" width="14" height="3" fill="#fff" /></svg>
              </ZoomBtn>
              <Player>
                <PlayerBtn $tone="plain">
                  <svg width="13" height="13"><rect width="13" height="13" fill="#fff" /></svg>
                </PlayerBtn>
                <PlayerBtn $tone="blue">
                  <svg width="16" height="20" viewBox="0 0 16 20"><path d="M0 0l16 10L0 20z" fill="#fff" /></svg>
                </PlayerBtn>
                <PlayerBtn $tone="navy">
                  <svg width="12" height="12" viewBox="0 0 12 12"><path d="M0 12V8h6V0h6v12z" fill="#fff" /></svg>
                </PlayerBtn>
                <PlayerBtn $tone="plain">
                  <svg width="24" height="24" viewBox="0 0 24 24">
                    <path d="M1 1h8L6.500 3.500 10 7 7 10 3.500 6.500 1 9zM23 1v8l-2.500-2.500L17 10l-3-3 3.500-3.500L15 1zM1 23v-8l2.500 2.500L7 14l3 3-3.500 3.500L9 23zM23 23h-8l2.500-2.500L14 17l3-3 3.500 3.500L23 15z" fill="#fff" />
                  </svg>
                </PlayerBtn>
              </Player>
            </CanvasWrap>
            <SimRow>
              <SimBadge>SIM</SimBadge>
              <SimTime>00hr : 00m : 06s</SimTime>
              <SimPercent>2%</SimPercent>
            </SimRow>
            <BottomTabs>
              <BottomTab $w={79}>Table View</BottomTab>
              <BottomTab $w={103}>Output Window</BottomTab>
              <BottomTab $w={70} $warn>Error Log</BottomTab>
              <BottomTab $w={109}>Watch Variables</BottomTab>
              <BottomTab $w={123}>Batch Experiments</BottomTab>
            </BottomTabs>
          </Workspace>
        </Main>

        <StatusBar>Select a node by clicking on it inside the 3D View</StatusBar>

        <Taskbar>
          <StartBtn><WindowsLogo /></StartBtn>
          <SearchField>
            <Search size={19} strokeWidth={1.4} color="#222" style={{ transform: "scaleX(-1)" }} />
            Type here to search
          </SearchField>
          <TaskSlot $w={48}>
            <svg width="16" height="16"><circle cx="8" cy="8" r="6.5" fill="none" stroke="#fff" strokeWidth="2" /></svg>
          </TaskSlot>
          <TaskSlot>
            <svg width="18" height="18" viewBox="0 0 18 18">
              <path d="M1 .5h11M1 17.500h11M1.500 4.500h10v9h-10zM15 2v3M15 12v4" fill="none" stroke="#fff" strokeWidth="1.2" />
              <rect x="14" y="6.500" width="3" height="3" fill="#fff" />
            </svg>
          </TaskSlot>
          <TaskSlot $w={50}><EdgeLogo /></TaskSlot>
          <TaskSlot $line={40} $w={50}><FolderLogo /></TaskSlot>
          <TaskSlot><StoreLogo /></TaskSlot>
          <TaskSlot><MailLogo /></TaskSlot>
          <TaskSlot $line={40} $w={48}><ChromeLogo /></TaskSlot>
          <TaskSlot $line={45} $active><QnTile>QN</QnTile></TaskSlot>
          <TaskSlot $line={40} $w={50}>
            <TvArrows bg="#0a5ce0" disc="#fff" arrow="#0a5ce0" size={24} />
          </TaskSlot>
          <Tray>
            <TrayCell $w={24}><TrayChevron size={20} strokeWidth={1.2} /></TrayCell>
            <TrayCell $w={22}>
              <svg width="16" height="14" viewBox="0 0 16 14">
                <path d="M.5 4.500h3l4-4v13l-4-4h-3z" fill="none" stroke="#eee" />
                <path d="M10 5l4 4M14 5l-4 4" stroke="#eee" />
              </svg>
            </TrayCell>
            <TrayCell $w={28}>
              <svg width="17" height="15" viewBox="0 0 17 15">
                <path d="M2.500 2.500h14v9h-14zM6 14.500h7M9.500 11.500v3M.5.500h5v4h-5z" fill="#1b1b1b" stroke="#eee" />
              </svg>
            </TrayCell>
            <TrayCell $w={32}><span>ENG</span><span>US</span></TrayCell>
            <TrayCell $w={66}><span>11:18 AM</span><span>1/1/2021</span></TrayCell>
            <NotifyWrap>
              <svg width="18" height="17" viewBox="0 0 18 17">
                <path d="M1 1h16v11H9l-3 3v-3H1z" fill="#fff" />
                <path d="M4 4h10M4 6.500h10M4 9h6" stroke="#444" />
              </svg>
              <NotifyBadge>2</NotifyBadge>
            </NotifyWrap>
            <ShowDesktop />
          </Tray>
        </Taskbar>

        <TvHandle><ChevronRight size={13} strokeWidth={2.4} /></TvHandle>
        <TvPanel>
          <TvHead>
            <TvLogoBox><TvArrows bg="#0c4a72" disc="#808080" arrow="#0c3c78" size={38} /></TvLogoBox>
            <TvBrand><b>Team</b>Viewer</TvBrand>
            <TvSub>Free license (non-commercial use only)</TvSub>
            <TvClose><FaTimes size={14} /></TvClose>
            <TvTools>
              <FaVideo size={17} />
              <FaHeadset size={17} />
              <FaComments size={17} />
              <svg width="16" height="16" viewBox="0 0 16 16"><path d="M1 2h3v12H1zM5 1h10v14H5z" fill="#707070" /><path d="M7 5h6M7 8h6M7 11h6" stroke="#002055" /></svg>
              <FaPaintBrush size={16} />
              <FaAngleDoubleLeft size={15} />
            </TvTools>
          </TvHead>
          <TvBody>
            <TvRow>
              <svg width="10" height="7"><path d="M0 0h10L5 7z" fill="#1e2a3a" /></svg>
              Session list
              <TvRowEnd>
                <TvExternal width="12" height="12" viewBox="0 0 12 12">
                  <path d="M1 3h4M1 3v8h8V8" fill="none" stroke="#222" strokeWidth="1.4" /><path d="M6 1h5v5zM8 4L5 7" stroke="#222" fill="#222" />
                </TvExternal>
                <FaCog size={12} color="#3a3a3a" />
                <svg width="5" height="3"><path d="M0 0h5L2.500 3z" fill="#3a3a3a" /></svg>
              </TvRowEnd>
            </TvRow>
            <TvSessionRow>
              <TvAvatar>
                <svg width="14" height="14" viewBox="0 0 14 14"><circle cx="7" cy="4.500" r="3.500" fill="#4a4a4a" /><path d="M0 14c0-5 14-5 14 0z" fill="#4a4a4a" /></svg>
              </TvAvatar>
              AVILASHs-Air (736 854 682)
              <svg width="10" height="7"><path d="M0 0h10L5 7z" fill="#1e1e1e" /></svg>
              <TvRowEnd>
                <svg width="13" height="13" viewBox="0 0 13 13"><path d="M0 0l13 4-5 1 4 6-2 2-4-6-3 4z" fill="#22569a" /></svg>
              </TvRowEnd>
            </TvSessionRow>
          </TvBody>
          <TvFoot>www.teamviewer.com</TvFoot>
        </TvPanel>
      </Desktop>
    </Page>
  );
};

export default App;
